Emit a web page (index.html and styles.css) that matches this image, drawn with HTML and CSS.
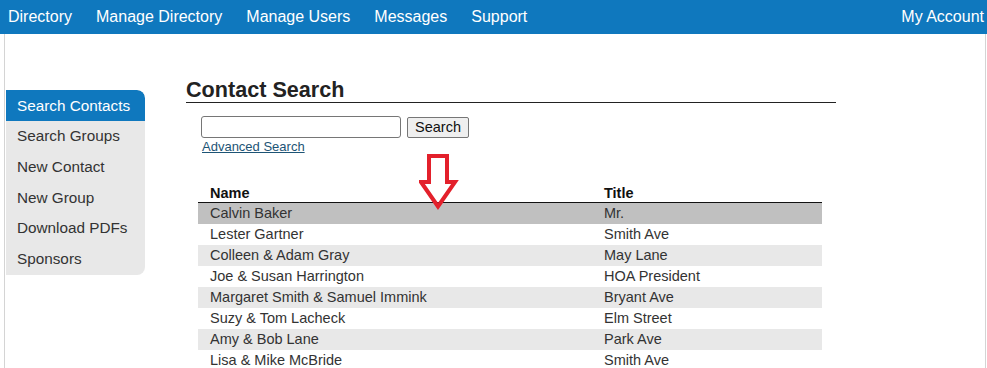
FILE: index.html
```html
<!DOCTYPE html>
<html lang="en">

<head>
    <meta http-equiv="Content-Type" content="text/html;charset=UTF-8">
    <title>Contact Search</title>
    <link rel="stylesheet" href="styles.css">
</head>

<body>
    <div class="topnav">
        <ul class="menu">
            <li><a href="#">Directory</a></li>
            <li><a href="#">Manage Directory</a></li>
            <li><a href="#">Manage Users</a></li>
            <li><a href="#">Messages</a></li>
            <li><a href="#">Support</a></li>
        </ul>
        <a class="account" href="#">My Account</a>
    </div>

    <div class="page">
        <ul class="sidebar">
            <li class="active"><a href="#">Search Contacts</a></li>
            <li><a href="#">Search Groups</a></li>
            <li><a href="#">New Contact</a></li>
            <li><a href="#">New Group</a></li>
            <li><a href="#">Download PDFs</a></li>
            <li><a href="#">Sponsors</a></li>
        </ul>

        <div class="main">
            <h2>Contact Search</h2>
            <div class="search">
                <div class="search-row">
                    <input type="text">
                    <button>Search</button>
                </div>
                <a class="advanced" href="#">Advanced Search</a>

                <!-- annotation arrow -->
                <svg class="arrow" width="40" height="56" viewBox="0 0 40 56">
                    <path d="M10 2 H28 V28 H36 L19 52.5 L2 28 H10 Z" fill="none" stroke="#e3202b" stroke-width="4" stroke-linejoin="miter"/>
                </svg>
            </div>

            <table class="contacts">
                <thead>
                    <tr>
                        <th class="col-name">Name</th>
                        <th>Title</th>
                    </tr>
                </thead>
                <tbody>
                    <tr class="selected"><td>Calvin Baker</td><td>Mr.</td></tr>
                    <tr><td>Lester Gartner</td><td>Smith Ave</td></tr>
                    <tr><td>Colleen &amp; Adam Gray</td><td>May Lane</td></tr>
                    <tr><td>Joe &amp; Susan Harrington</td><td>HOA President</td></tr>
                    <tr><td>Margaret Smith &amp; Samuel Immink</td><td>Bryant Ave</td></tr>
                    <tr><td>Suzy &amp; Tom Lacheck</td><td>Elm Street</td></tr>
                    <tr><td>Amy &amp; Bob Lane</td><td>Park Ave</td></tr>
                    <tr><td>Lisa &amp; Mike McBride</td><td>Smith Ave</td></tr>
                </tbody>
            </table>
        </div>
    </div>
</body>

</html>
```

FILE: styles.css
```css
* {
    margin: 0;
    padding: 0;
}

body {
    font-family: "Liberation Sans", Arial, sans-serif;
    font-size: 14px;
    color: #333;
    background-color: #fff;
    overflow: hidden;
}

ul li {
    list-style: none;
}

a {
    text-decoration: none;
}

/* top bar */
.topnav {
    display: flex;
    justify-content: space-between;
    height: 34px;
    line-height: 34px;
    padding: 0 3px 0 8px;
    background-color: #0f78be;
    font-size: 16px;
}

.topnav a {
    color: #fff;
}

.menu {
    display: flex;
    gap: 24px;
}

/* page frame */
.page {
    display: flex;
    margin-left: 4px;
    width: 980px;
    height: 334px;
    border-left: 1px solid #d4d4d4;
    border-right: 1px solid #d4d4d4;
}

.sidebar {
    width: 139px;
    margin-top: 56px;
    margin-left: 1px;
    align-self: flex-start;
    background-color: #e8e8e8;
    border-radius: 0 8px 8px 0;
    overflow: hidden;
    font-size: 15.3px;
}

.sidebar li {
    height: 30.8px;
    line-height: 30.8px;
    padding-left: 11px;
}

.sidebar a {
    color: #333;
}

.sidebar .active {
    height: 31px;
    line-height: 31px;
    background-color: #0f78be;
    border-radius: 0 8px 0 0;
}

.sidebar .active a {
    color: #fff;
}

/* content */
.main {
    width: 650px;
    margin-left: 41px;
}

.main h2 {
    margin-top: 44px;
    font-size: 21.6px;
    line-height: 23px;
    padding-bottom: 1px;
    color: #222;
    border-bottom: 1px solid #222;
}

.search {
    position: relative;
    padding-left: 15px;
    margin-top: 13px;
}

.search-row {
    display: flex;
    align-items: center;
    gap: 6px;
}

.search input {
    width: 200px;
    height: 22px;
    border: 1px solid #767676;
    border-radius: 3px;
    box-sizing: border-box;
    outline: none;
}

.search button {
    width: 62px;
    height: 21px;
    font-family: "Liberation Sans", Arial, sans-serif;
    font-size: 14.5px;
    color: #111;
    background-color: #efefef;
    border: 1px solid #767676;
    border-radius: 2px;
}

.advanced {
    display: inline-block;
    margin-left: 1px;
    font-size: 13px;
    line-height: 16px;
    color: #1d5475;
    text-decoration: underline;
}

.arrow {
    position: absolute;
    left: 233px;
    top: 38px;
}

.contacts {
    width: 624px;
    margin-top: 28px;
    margin-left: 12px;
    border-collapse: collapse;
    font-size: 14.5px;
}

.contacts th {
    text-align: left;
    height: 18px;
    padding: 1px 12px 0;
    color: #111;
    font-size: 14.5px;
    border-bottom: 1px solid #111;
}

.contacts .col-name {
    width: 370px;
}

.contacts td {
    height: 21px;
    padding: 0 12px;
    line-height: 21px;
}

.contacts tbody tr:nth-child(odd) {
    background-color: #e8e8e8;
}

.contacts tbody tr.selected {
    background-color: #c0c0c0;
}
```
